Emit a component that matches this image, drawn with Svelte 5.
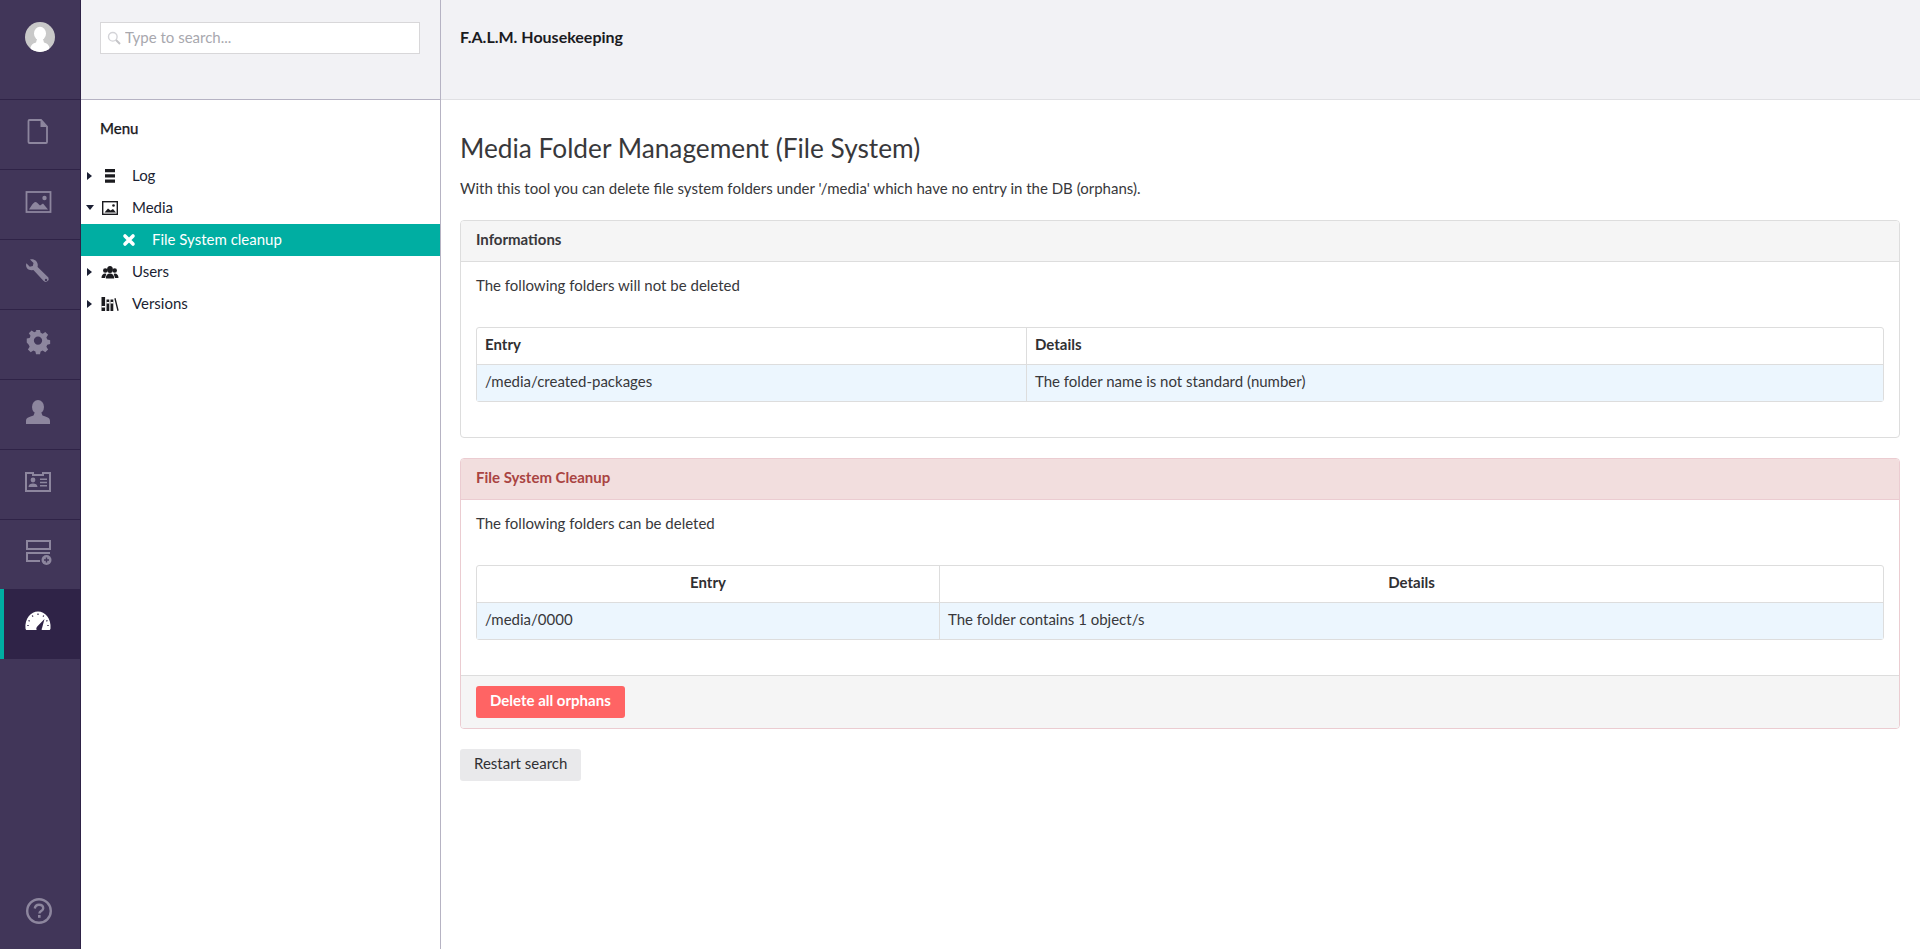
<script>
  const sections = [
    { id: 'content', active: false },
    { id: 'media', active: false },
    { id: 'settings', active: false },
    { id: 'gear', active: false },
    { id: 'user', active: false },
    { id: 'card', active: false },
    { id: 'forms', active: false },
    { id: 'gauge', active: true }
  ];

  const tree = [
    { name: 'Log', icon: 'log', open: false },
    { name: 'Media', icon: 'media', open: true },
    { name: 'File System cleanup', icon: 'x', child: true },
    { name: 'Users', icon: 'users', open: false },
    { name: 'Versions', icon: 'versions', open: false }
  ];
</script>

<div class="app">
  <nav class="sections">
    <div class="avatar">
      <svg width="30" height="30" viewBox="0 0 30 30">
        <defs><clipPath id="av"><circle cx="15" cy="15" r="15" /></clipPath></defs>
        <circle cx="15" cy="15" r="15" fill="#c9c9c9" />
        <g clip-path="url(#av)" fill="#fff">
          <ellipse cx="15" cy="11.5" rx="6" ry="6.8" />
          <path d="M12 17h6l1 3.5c4 1.2 6 3 6 10H5c0-7 2-8.800 6-10z" />
        </g>
      </svg>
    </div>
    {#each sections as s}
      <div class="section" class:active={s.active}>
        <svg width="30" height="30" viewBox="0 0 30 30">
          {#if s.id === 'content'}
            <path d="M6.500 4h11.500l6 6.500V26a1 1 0 0 1-1 1H6.500a1 1 0 0 1-1-1V5a1 1 0 0 1 1-1z" fill="none" stroke="currentColor" stroke-width="1.800" />
            <path d="M17.500 4v7h6.500z" fill="currentColor" />
          {:else if s.id === 'media'}
            <rect x="3.500" y="6" width="24" height="20" fill="none" stroke="currentColor" stroke-width="1.800" />
            <circle cx="21.500" cy="12" r="2.200" fill="currentColor" />
            <path d="M6 23.500c2-3 4-7 6.500-7.500 2 .5 3 2.500 4.500 3.500l3-2 5 6z" fill="currentColor" />
          {:else if s.id === 'settings'}
            <path d="M8 3.200l-1 .2 3.500 3.600-.7 3-3 .7L3.400 7.300l-.3 1c-.5 3 1.800 6 5.500 6l1.800-.2 10 10.700a3 3 0 0 0 5-3.200L14.600 11l.2-2C14.600 5 11.500 2.800 8 3.200z" fill="currentColor" />
            <circle cx="23" cy="24" r="1.200" fill="#413659" />
          {:else if s.id === 'gear'}
            <path fill-rule="evenodd" fill="currentColor" d="M12.800 4h4.400l.7 3.300 2.300 1 2.900-1.900 3.100 3.100-1.900 2.900 1 2.300 3.200.7v4.400l-3.200.7-1 2.300 1.900 2.900-3.100 3.100-2.900-1.900-2.300 1-.7 3.100h-4.400l-.7-3.100-2.300-1-2.900 1.900-3.100-3.100 1.900-2.900-1-2.300L2.500 18v-4.400l3.200-.7 1-2.300-1.900-2.900 3.100-3.100 2.900 1.900 2.300-1zM15 11.300a4.600 4.600 0 1 0 0 9.200 4.600 4.600 0 0 0 0-9.200z" transform="translate(1.500 .3) scale(.9)" />
          {:else if s.id === 'user'}
            <ellipse cx="15" cy="11" rx="6" ry="7" fill="currentColor" />
            <path d="M11.500 17h7l1 2.500c4 1.300 7.500 2 7.500 5.500v3H3v-3c0-3.500 3.500-4.200 7.500-5.500z" fill="currentColor" />
          {:else if s.id === 'card'}
            <path fill-rule="evenodd" fill="currentColor" d="M2 6h9v2h8V6h9v20H2zM4 8v16h22V8h-5v2H9V8z" />
            <circle cx="10" cy="14" r="2.400" fill="currentColor" />
            <path d="M5.500 21c0-2.500 2-3.500 4.500-3.500s4.500 1 4.500 3.500zM17 12.500h7V14h-7zM17 15.800h7v1.500h-7zM17 19h7v1.500h-7z" fill="currentColor" />
          {:else if s.id === 'forms'}
            <rect x="4" y="5" width="23" height="8" fill="none" stroke="currentColor" stroke-width="2" />
            <path d="M3 16h24v2H5v6h12v2H3z" fill="currentColor" />
            <circle cx="23.500" cy="24" r="5" fill="currentColor" />
            <path d="M21 23.300h5v1.400h-5zM22.800 21.500h1.400v5h-1.400z" fill="#413659" />
          {:else}
            <path fill-rule="evenodd" fill="currentColor" d="M2.500 23.500C1.500 13.500 8 6.500 15 6.500S28.500 13.500 27.500 23.500c-.1.900-.5 1.500-1.300 1.500H19c-.5-.2-.5-1.200 0-1.800l2.500-9.200-6.800 7c-1.300 1.300-1.800 2.800-1 4H3.800c-.8 0-1.200-.6-1.300-1.500z" />
            <path d="M15 8.500v1.400M9.200 10.500l.8 1.200M20.800 10.500l-.8 1.200M5.500 15.500l1.200.6M24.500 15.500l-1.200.6M4.300 20.500h1.400M24.300 20.500h1.400" stroke="#2f2347" stroke-width="1.200" />
          {/if}
        </svg>
      </div>
    {/each}
    <div class="help">
      <svg width="30" height="30" viewBox="0 0 30 30">
        <circle cx="15" cy="15" r="11.800" fill="none" stroke="currentColor" stroke-width="2.400" />
        <path d="M10.800 12.500c.3-2.500 2-3.800 4.200-3.800 2.500 0 4.200 1.400 4.200 3.500 0 2.800-3.600 2.800-3.800 5.300" fill="none" stroke="currentColor" stroke-width="2.400" />
        <rect x="14" y="19" width="2.600" height="2.800" fill="currentColor" />
      </svg>
    </div>
  </nav>

  <aside class="tree-col">
    <div class="search-bar">
      <label class="search">
        <svg width="14" height="14" viewBox="0 0 14 14">
          <circle cx="5.800" cy="5.800" r="4.300" fill="none" stroke="#d4d4d8" stroke-width="1.400" />
          <path d="M9 9l4 4" stroke="#c4c4c8" stroke-width="2" />
        </svg>
        <input type="text" placeholder="Type to search..." />
      </label>
    </div>
    <h5>Menu</h5>
    <ul>
      {#each tree as item}
        <li class:child={item.child}>
          {#if !item.child}
            <span class="caret" class:open={item.open}></span>
          {/if}
          <span class="icon">
            {#if item.icon === 'log'}
              <svg width="18" height="16" viewBox="0 0 18 16"><path d="M4 1h10v3.200H4zM4 6.300h10v3.200H4zM4 11.600h10v3.200H4z" fill="#1b1b1f" /></svg>
            {:else if item.icon === 'media'}
              <svg width="18" height="16" viewBox="0 0 18 16"><rect x="1.700" y="1.700" width="14.600" height="12.600" fill="none" stroke="#1b1b1f" stroke-width="1.400" /><circle cx="12.500" cy="5.500" r="1.300" fill="#1b1b1f" /><path d="M3.500 12.500l3.500-4 2.500 2 2.500-1.500 3 3.500z" fill="#1b1b1f" /></svg>
            {:else if item.icon === 'x'}
              <svg width="14" height="14" viewBox="0 0 14 14"><path d="M3 3l8 8M11 3l-8 8" stroke="#fff" stroke-width="3.600" stroke-linecap="round" /></svg>
            {:else if item.icon === 'users'}
              <svg width="18" height="16" viewBox="0 0 18 16"><ellipse cx="9" cy="5.500" rx="2.900" ry="3.500" fill="#1b1b1f" /><circle cx="4.300" cy="6.500" r="2.300" fill="#1b1b1f" /><circle cx="13.700" cy="6.500" r="2.300" fill="#1b1b1f" /><path d="M4.800 14.500c0-3.500 1.800-5 4.200-5s4.200 1.500 4.200 5zM.5 14c0-3 1.500-4.500 3.800-4.500l1 .5-1.300 4zM17.500 14c0-3-1.500-4.500-3.800-4.500l-1 .5 1.300 4z" fill="#1b1b1f" /></svg>
            {:else}
              <svg width="18" height="16" viewBox="0 0 18 16"><path d="M.5 1h3.600v14H.5zM5.500 3.500h2.800V15H5.500zM9.500 3.500h2.800V15H9.500zM13.300 2.500l1.300-.5 3.100 12.500-1.300.5z" fill="#1b1b1f" /><path d="M.5 10h3.600v1.400H.5zM5.500 6h2.800v1.400H5.500zM9.500 6h2.800v1.400H9.500z" fill="#fff" /></svg>
            {/if}
          </span>
          <span class="name">{item.name}</span>
        </li>
      {/each}
    </ul>
  </aside>

  <div class="main">
    <header><strong>F.A.L.M. Housekeeping</strong></header>
    <div class="content">
      <h3>Media Folder Management (File System)</h3>
      <p class="lead">With this tool you can delete file system folders under '/media' which have no entry in the DB (orphans).</p>

      <section class="panel">
        <div class="panel-head">Informations</div>
        <div class="panel-body">
          <p>The following folders will not be deleted</p>
          <table class="first">
            <thead><tr><th>Entry</th><th>Details</th></tr></thead>
            <tbody><tr><td>/media/created-packages</td><td>The folder name is not standard (number)</td></tr></tbody>
          </table>
        </div>
      </section>

      <section class="panel danger">
        <div class="panel-head">File System Cleanup</div>
        <div class="panel-body">
          <p>The following folders can be deleted</p>
          <table class="second">
            <thead><tr><th>Entry</th><th>Details</th></tr></thead>
            <tbody><tr><td>/media/0000</td><td>The folder contains 1 object/s</td></tr></tbody>
          </table>
        </div>
        <div class="panel-foot"><button class="btn-danger">Delete all orphans</button></div>
      </section>

      <button class="btn-plain">Restart search</button>
    </div>
  </div>
</div>

<style>
  :global(body) {
    margin: 0;
    font-family: Lato, "Liberation Sans", sans-serif;
    font-size: 15px;
    color: #38383b;
    background: #fff;
  }

  .app {
    display: flex;
    height: 949px;
    overflow: hidden;
  }

  .sections {
    width: 80px;
    flex: none;
    display: flex;
    flex-direction: column;
    background: #413659;
    border-right: 1px solid #2f2347;
  }

  .avatar {
    height: 99px;
    display: flex;
    justify-content: center;
    padding-top: 22px;
    box-sizing: border-box;
  }

  .section {
    height: 70px;
    box-sizing: border-box;
    border-top: 1px solid #2f2347;
    display: flex;
    align-items: center;
    justify-content: center;
    color: #8d869e;
    padding: 0 4px 8px 0;
  }

  .section.active {
    background: #2f2347;
    border-top: 0;
    border-left: 4px solid #00aea2;
    padding-right: 8px;
    color: #fff;
  }

  .help {
    margin-top: auto;
    height: 69px;
    display: flex;
    align-items: center;
    justify-content: center;
    color: #8d869e;
    padding: 0 2px 7px 0;
    box-sizing: border-box;
  }

  .tree-col {
    width: 359px;
    flex: none;
    border-right: 1px solid #b6b3c3;
  }

  .search-bar {
    height: 100px;
    background: #f2f2f5;
    border-bottom: 1px solid #b6b3c3;
    padding: 22px 19px 0;
    box-sizing: border-box;
  }

  .search {
    display: flex;
    align-items: center;
    gap: 4px;
    height: 32px;
    width: 320px;
    box-sizing: border-box;
    background: #fff;
    border: 1px solid #d8d7d9;
    padding-left: 6px;
  }

  input {
    border: 0;
    outline: 0;
    flex: 1;
    min-width: 0;
    font: 15px Lato, "Liberation Sans", sans-serif;
    padding: 0 0 2px;
    background: none;
  }

  input::placeholder {
    color: #a8a8ae;
  }

  h5 {
    margin: 0;
    padding: 18px 19px 0;
    font-size: 15px;
    line-height: 20px;
    color: #1b1b1f;
    font-weight: 500;
    -webkit-text-stroke: 0.25px #1b1b1f;
  }

  ul {
    list-style: none;
    margin: 22px 0 0;
    padding: 0;
  }

  li {
    height: 32px;
    display: flex;
    align-items: center;
    position: relative;
    color: #1b1f33;
    font-size: 15px;
  }

  li.child {
    background: #00aea2;
    color: #fff;
  }

  .caret {
    position: absolute;
    left: 6px;
    top: 12px;
    width: 0;
    height: 0;
    border-top: 4px solid transparent;
    border-bottom: 4px solid transparent;
    border-left: 5px solid #1b1f33;
  }

  .caret.open {
    left: 5px;
    top: 13px;
    border-left: 4px solid transparent;
    border-right: 4px solid transparent;
    border-top: 5px solid #1b1f33;
    border-bottom: 0;
  }

  .icon {
    position: absolute;
    left: 20px;
    width: 18px;
    height: 16px;
    display: flex;
    align-items: center;
    justify-content: center;
  }

  .child .icon {
    left: 39px;
  }

  .name {
    margin-left: 51px;
    padding-bottom: 3px;
  }

  .child .name {
    margin-left: 71px;
  }

  .main {
    flex: 1;
    min-width: 0;
  }

  header {
    height: 100px;
    box-sizing: border-box;
    background: #f2f2f5;
    border-bottom: 1px solid #e0e0e3;
    padding: 27px 19px 0;
    line-height: 20px;
    font-size: 16px;
    color: #1b1b1f;
  }

  header strong {
    font-weight: 700;
  }

  .content {
    padding: 34px 20px 0 19px;
  }

  h3 {
    margin: 0;
    font-size: 26.25px;
    line-height: 28px;
    font-weight: 400;
    color: #38383b;
  }

  .lead {
    margin: 16px 0 22px;
    line-height: 20px;
  }

  p {
    margin: 0;
  }

  .panel {
    border: 1px solid #ddd;
    border-radius: 4px;
    margin-bottom: 20px;
  }

  .panel-head {
    height: 41px;
    box-sizing: border-box;
    background: #f5f5f5;
    border-bottom: 1px solid #ddd;
    padding: 8px 15px;
    line-height: 20px;
    font-weight: 700;
    border-radius: 3px 3px 0 0;
    color: #38383b;
  }

  .panel-body {
    padding: 13px 15px 15px;
  }

  .panel-body p {
    line-height: 20px;
    margin-bottom: 32px;
  }

  table {
    width: 100%;
    table-layout: fixed;
    border-collapse: separate;
    border-spacing: 0;
    border: 1px solid #ddd;
    border-radius: 3px;
    margin-bottom: 20px;
    line-height: 20px;
  }

  th, td {
    padding: 6px 8px 10px;
    height: 36px;
    box-sizing: border-box;
    text-align: left;
    vertical-align: middle;
  }

  th {
    height: 37px;
    font-weight: 700;
    border-bottom: 1px solid #ddd;
    color: #303033;
  }

  td {
    background: #ecf6fe;
  }

  th + th, td + td {
    border-left: 1px solid #ddd;
  }

  .first th:first-child {
    width: 549px;
  }

  .second th:first-child {
    width: 462px;
  }

  .second th {
    text-align: center;
  }

  .danger {
    border-color: #ebccd1;
  }

  .danger .panel-head {
    background: #f2dede;
    border-color: #ebccd1;
    color: #a94442;
  }

  .panel-foot {
    background: #f5f5f5;
    border-top: 1px solid #ddd;
    padding: 10px 15px;
    border-radius: 0 0 3px 3px;
    height: 53px;
    box-sizing: border-box;
  }

  button {
    font: 15px/20px Lato, "Liberation Sans", sans-serif;
    border: 0;
    border-radius: 3px;
    height: 32px;
    padding: 0 14px 4px;
  }

  .btn-danger {
    background: #ff6464;
    color: #fff;
    font-weight: 700;
  }

  .btn-plain {
    background: #e9e9eb;
    color: #303033;
  }
</style>
